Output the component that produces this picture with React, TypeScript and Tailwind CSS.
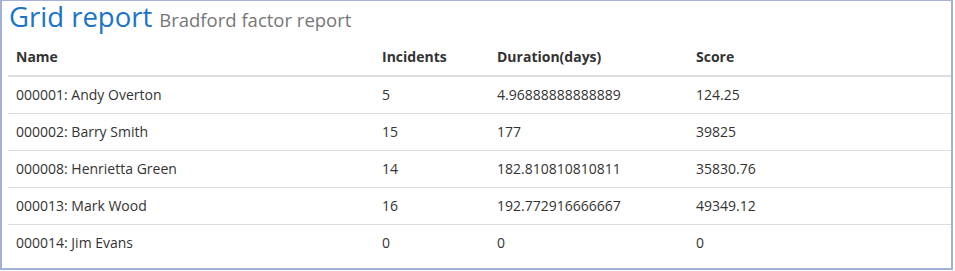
const rows = [
  { name: '000001: Andy Overton', incidents: '5', duration: '4.96888888888889', score: '124.25' },
  { name: '000002: Barry Smith', incidents: '15', duration: '177', score: '39825' },
  { name: '000008: Henrietta Green', incidents: '14', duration: '182.810810810811', score: '35830.76' },
  { name: '000013: Mark Wood', incidents: '16', duration: '192.772916666667', score: '49349.12' },
  { name: '000014: Jim Evans', incidents: '0', duration: '0', score: '0' },
];

export default function App() {
  return (
    <div className="w-[955px] h-[271px] bg-white font-['Open_Sans',sans-serif] text-[#333]">
      <div className="w-[953px] h-[270px] border-l-2 border-t border-r-2 border-b-2 border-[#a2b1d5] pl-[6px]">
        {/* Title */}
        <h1 className="flex items-baseline gap-[7px] px-[1px] leading-[32px]">
          <span className="text-[27.5px] leading-[32px] text-[#1a74c6]">Grid report</span>
          <span className="text-[18.5px] leading-[32px] text-[#777]">Bradford factor report</span>
        </h1>

        {/* Table */}
        <table className="w-full mt-[3px] text-[14px] border-collapse">
          <thead>
            <tr className="border-b-2 border-[#ddd] text-left">
              <th className="w-[366px] px-2 py-2 leading-5 font-bold">Name</th>
              <th className="w-[115px] px-2 py-2 leading-5 font-bold">Incidents</th>
              <th className="w-[199px] px-2 py-2 leading-5 font-bold">Duration(days)</th>
              <th className="px-2 py-2 leading-5 font-bold">Score</th>
            </tr>
          </thead>
          <tbody>
            {rows.map((r, i) => (
              <tr key={r.name} className={i > 0 ? 'border-t border-[#ddd]' : ''}>
                <td className="px-2 py-2 leading-5">{r.name}</td>
                <td className="px-2 py-2 leading-5">{r.incidents}</td>
                <td className="px-2 py-2 leading-5">{r.duration}</td>
                <td className="px-2 py-2 leading-5">{r.score}</td>
              </tr>
            ))}
          </tbody>
        </table>
      </div>
    </div>
  );
}
